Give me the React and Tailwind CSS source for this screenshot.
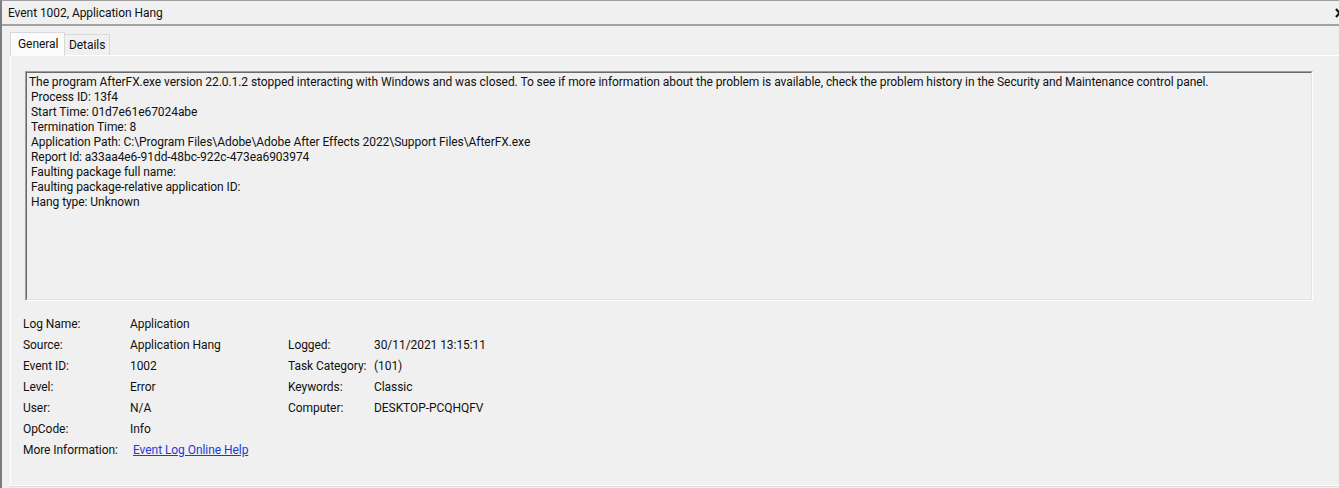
const description = [
  "The program AfterFX.exe version 22.0.1.2 stopped interacting with Windows and was closed. To see if more information about the problem is available, check the problem history in the Security and Maintenance control panel.",
  "Process ID: 13f4",
  "Start Time: 01d7e61e67024abe",
  "Termination Time: 8",
  "Application Path: C:\\Program Files\\Adobe\\Adobe After Effects 2022\\Support Files\\AfterFX.exe",
  "Report Id: a33aa4e6-91dd-48bc-922c-473ea6903974",
  "Faulting package full name: ",
  "Faulting package-relative application ID: ",
  "Hang type: Unknown",
];

const rows = [
  { label: "Log Name:", value: "Application" },
  { label: "Source:", value: "Application Hang", label2: "Logged:", value2: "30/11/2021 13:15:11" },
  { label: "Event ID:", value: "1002", label2: "Task Category:", value2: "(101)" },
  { label: "Level:", value: "Error", label2: "Keywords:", value2: "Classic" },
  { label: "User:", value: "N/A", label2: "Computer:", value2: "DESKTOP-PCQHQFV" },
  { label: "OpCode:", value: "Info" },
  { label: "More Information:", link: "Event Log Online Help" },
];

function FieldRow({ row }) {
  return (
    <div className="flex h-[21px] items-center">
      <span className="w-[107px] shrink-0">{row.label}</span>
      {row.link ? (
        <a href="#" className="ml-[3px] text-[#1c3bd1] underline underline-offset-[1px]">
          {row.link}
        </a>
      ) : (
        <span className="w-[158px] shrink-0">{row.value}</span>
      )}
      {row.label2 && (
        <>
          <span className="w-[86px] shrink-0">{row.label2}</span>
          <span>{row.value2}</span>
        </>
      )}
    </div>
  );
}

export default function App() {
  return (
    <div
      className="w-[1339px] h-[488px] overflow-hidden bg-[#f0f0f0] border-l-2 border-t border-l-[#7d7d7d] border-t-[#a0a0a0] text-[12px] tracking-[-0.06px] text-[#111] flex flex-col"
      style={{ fontFamily: "Roboto, 'Liberation Sans', sans-serif" }}
    >
      {/* title bar */}
      <div className="h-[25px] shrink-0 flex items-center pl-[6px] border-b-2 border-[#a3a3a3]">
        <span>Event 1002, Application Hang</span>
        <svg className="ml-auto mr-[-5px]" width="9" height="10" viewBox="0 0 9 10">
          <path d="M1 1 L8 9 M8 1 L1 9" stroke="#111" strokeWidth="2.2" />
        </svg>
      </div>

      {/* tabs */}
      <div className="flex flex-col flex-1 pl-[8px] pt-[6px]">
        <div className="flex items-end h-[23px] relative z-10">
          <div className="h-[24px] w-[55px] bg-[#fbfbfb] border border-b-0 border-[#d9d9d9] flex items-center pl-[7px] mb-[-1px]">
            <span className="mt-[-2px]">General</span>
          </div>
          <div className="h-[21px] w-[45px] bg-[#f0f0f0] border border-l-0 border-b-0 border-[#d9d9d9] flex items-center pl-[4px]">
            <span>Details</span>
          </div>
        </div>

        {/* panel */}
        <div className="flex-1 border border-white border-r-0 shadow-[0_1px_0_#dcdcdc] pl-[14px] pt-[15px] mb-[2px]">
          <div className="w-[1288px] h-[230px] border-t border-l border-t-[#a0a0a0] border-l-[#a0a0a0] border-b border-r border-b-white border-r-white">
            <div className="h-full border-t border-l border-t-[#6a6a6a] border-l-[#6a6a6a] border-b border-r border-b-[#e3e3e3] border-r-[#e3e3e3] pl-[2px] pt-[2px]">
              {description.map((line, i) => (
                <div key={i} className={`h-[15px] leading-[15px] whitespace-pre ${i > 0 ? "pl-[2px]" : ""}`}>
                  {line}
                </div>
              ))}
            </div>
          </div>

          <div className="ml-[-2px] mt-[12px] flex flex-col">
            {rows.map((row) => (
              <FieldRow key={row.label} row={row} />
            ))}
          </div>
        </div>
      </div>
    </div>
  );
}
